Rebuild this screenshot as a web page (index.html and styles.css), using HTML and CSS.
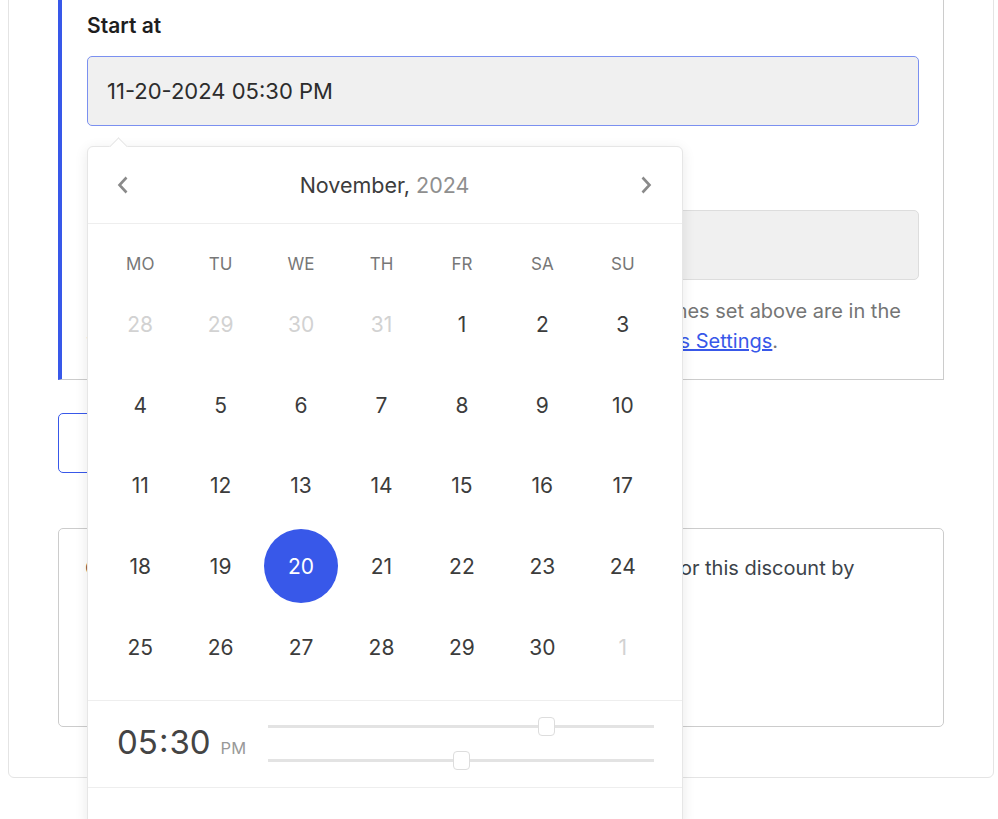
FILE: index.html
```html
<!DOCTYPE html>
<html lang="en">
<head>
  <meta charset="UTF-8" />
  <meta name="viewport" content="width=device-width, initial-scale=1.0" />
  <title>Discount schedule</title>
  <link rel="stylesheet" href="styles.css">
</head>
<body>
  <div class="card">
    <!-- Schedule section -->
    <div class="schedule">
      <div class="field">
        <label class="field-label" for="startAt">Start at</label>
        <div class="picker-wrap">
          <input type="text" id="startAt" class="date-input focused" value="11-20-2024 05:30 PM">

          <!-- Date picker popup -->
          <div class="calendar">
            <span class="cal-arrow"></span>
            <div class="cal-head">
              <button class="cal-nav" aria-label="Previous month">
                <svg width="14" height="20" viewBox="0 0 14 20"><path d="M10.5 2.5 L3.5 10 L10.5 17.5" fill="none" stroke="#8a8a8a" stroke-width="2.6"/></svg>
              </button>
              <div class="cal-title">November, <span class="cal-year">2024</span></div>
              <button class="cal-nav" aria-label="Next month">
                <svg width="14" height="20" viewBox="0 0 14 20"><path d="M3.5 2.5 L10.5 10 L3.5 17.5" fill="none" stroke="#8a8a8a" stroke-width="2.6"/></svg>
              </button>
            </div>
            <div class="cal-body">
              <div class="weekdays">
                <span>MO</span><span>TU</span><span>WE</span><span>TH</span><span>FR</span><span>SA</span><span>SU</span>
              </div>
              <div class="days" id="days"></div>
            </div>
            <div class="cal-time">
              <div class="time-value">05<span class="colon">:</span>30<span class="ampm">PM</span></div>
              <div class="sliders">
                <div class="slider"><span class="knob" style="left: 72%"></span></div>
                <div class="slider"><span class="knob" style="left: 50%"></span></div>
              </div>
            </div>
            <div class="cal-foot"></div>
          </div>
        </div>
      </div>

      <div class="field last">
        <label class="field-label" for="endAt">End at</label>
        <input type="text" id="endAt" class="date-input">
      </div>

      <p class="help">Please note that all of the discounts start and end dates and times set above are in the<br>timezone that is configured on your WordPress site in <a href="#">Payments Settings</a>.</p>
    </div>

    <button class="btn-outline">Remove end date</button>

    <div class="notice">
      <p>Customers can enter the discount code at checkout to qualify for this discount by</p>
    </div>
  </div>

  <script>
    "use strict";
    // build the month grid
    const days = document.getElementById("days");
    const cells = [];
    for (let d = 28; d <= 31; d++) cells.push({n: d, muted: true});
    for (let d = 1; d <= 30; d++) cells.push({n: d, muted: false});
    cells.push({n: 1, muted: true});
    cells.forEach(function (c) {
      const el = document.createElement("span");
      el.className = "day";
      if (c.muted) el.classList.add("muted");
      if (!c.muted && c.n === 20) el.classList.add("selected");
      el.textContent = c.n;
      days.appendChild(el);
    });
  </script>
</body>
</html>
```

FILE: styles.css
```css
/* BASE */
* {
  margin: 0;
  padding: 0;
  box-sizing: border-box;
}
body {
  font-family: Inter, "Noto Sans", sans-serif;
  background: #fff;
  color: #1e1e1e;
  min-height: 860px;
}
/* OUTER CARD */
.card {
  margin: -30px 4px 0 8px;
  padding: 0 49px 50px;
  border: 1px solid #e4e4e4;
  border-radius: 6px;
  background: #fff;
}
/* SCHEDULE SECTION */
.schedule {
  border: 1px solid #ccc;
  border-left: 4px solid #3858e9;
  border-top: none;
  padding: 40px 24px 23px 25px;
}
.field {
  margin-bottom: 39px;
}
.field.last {
  margin-bottom: 16px;
}
.field-label {
  display: block;
  font-size: 21px;
  font-weight: 600;
  line-height: 30px;
  margin-bottom: 15px;
}
.picker-wrap {
  position: relative;
}
.date-input {
  display: block;
  width: 100%;
  height: 70px;
  padding: 0 19px;
  font: inherit;
  font-size: 22px;
  color: #2c2c2c;
  background: #f0f0f0;
  border: 1px solid #ddd;
  border-radius: 5px;
  outline: none;
}
.date-input.focused {
  border-color: #7b90f0;
}
.help {
  font-size: 20px;
  line-height: 30px;
  color: #757575;
  white-space: nowrap;
}
.help a {
  color: #3858e9;
}
/* BUTTON + NOTICE */
.btn-outline {
  display: block;
  margin-top: 33px;
  height: 60px;
  padding: 0 40px;
  font: inherit;
  font-size: 20px;
  color: #3858e9;
  background: #fff;
  border: 1px solid #3858e9;
  border-radius: 5px;
}
.notice {
  margin-top: 55px;
  height: 199px;
  padding: 24px 26px;
  border: 1px solid #ccc;
  border-radius: 5px;
}
.notice p {
  font-size: 20px;
  line-height: 30px;
  color: #3c434a;
  white-space: nowrap;
}
/* CALENDAR POPUP */
.calendar {
  position: absolute;
  top: calc(100% + 20px);
  left: 0;
  width: 596px;
  background: #fff;
  border: 1px solid #e6e6e6;
  border-radius: 6px;
  box-shadow: 0 3px 14px rgba(0,0,0,0.09);
  z-index: 10;
}
.cal-arrow {
  position: absolute;
  top: -7px;
  left: 24px;
  width: 13px;
  height: 13px;
  background: #fff;
  border-top: 1px solid #e6e6e6;
  border-left: 1px solid #e6e6e6;
  transform: rotate(45deg);
}
.cal-head {
  display: flex;
  align-items: center;
  justify-content: space-between;
  height: 77px;
  padding: 0 29px 0 28px;
  border-bottom: 1px solid #eee;
}
.cal-nav {
  display: flex;
  background: none;
  border: none;
  cursor: pointer;
}
.cal-title {
  font-size: 21.5px;
  color: #3c3c3c;
}
.cal-year {
  color: #8f8f8f;
}
.cal-body {
  padding: 20px 19px 12px 12px;
}
.weekdays, .days {
  display: grid;
  grid-template-columns: repeat(7, 1fr);
}
.weekdays span {
  height: 40px;
  display: flex;
  align-items: center;
  justify-content: center;
  font-size: 17px;
  color: #777;
}
.day {
  height: 80.75px;
  display: flex;
  align-items: center;
  justify-content: center;
  font-size: 21px;
  color: #3c3c3c;
}
.day.muted {
  color: #d2d2d2;
}
.day.selected {
  width: 74px;
  height: 74px;
  margin: 3px auto;
  border-radius: 50%;
  background: #3858e9;
  color: #fff;
}
/* TIME */
.cal-time {
  display: flex;
  align-items: center;
  height: 88px;
  padding: 0 28px 0 29px;
  border-top: 1px solid #eee;
  border-bottom: 1px solid #eee;
}
.time-value {
  font-size: 33px;
  line-height: 1;
  color: #444;
  width: 151px;
  white-space: nowrap;
  padding-bottom: 2px;
}
.colon {
  margin: 0 1px;
  position: relative;
  top: -2px;
}
.ampm {
  font-size: 16.5px;
  color: #999;
  margin-left: 10px;
}
.sliders {
  flex: 1;
  display: flex;
  flex-direction: column;
  gap: 31px;
}
.slider {
  position: relative;
  height: 3px;
  background: #e3e3e3;
}
.knob {
  position: absolute;
  top: -8px;
  width: 17px;
  height: 19px;
  margin-left: -8px;
  background: #fff;
  border: 1px solid #ddd;
  border-radius: 4px;
}
.cal-foot {
  height: 40px;
}
```
